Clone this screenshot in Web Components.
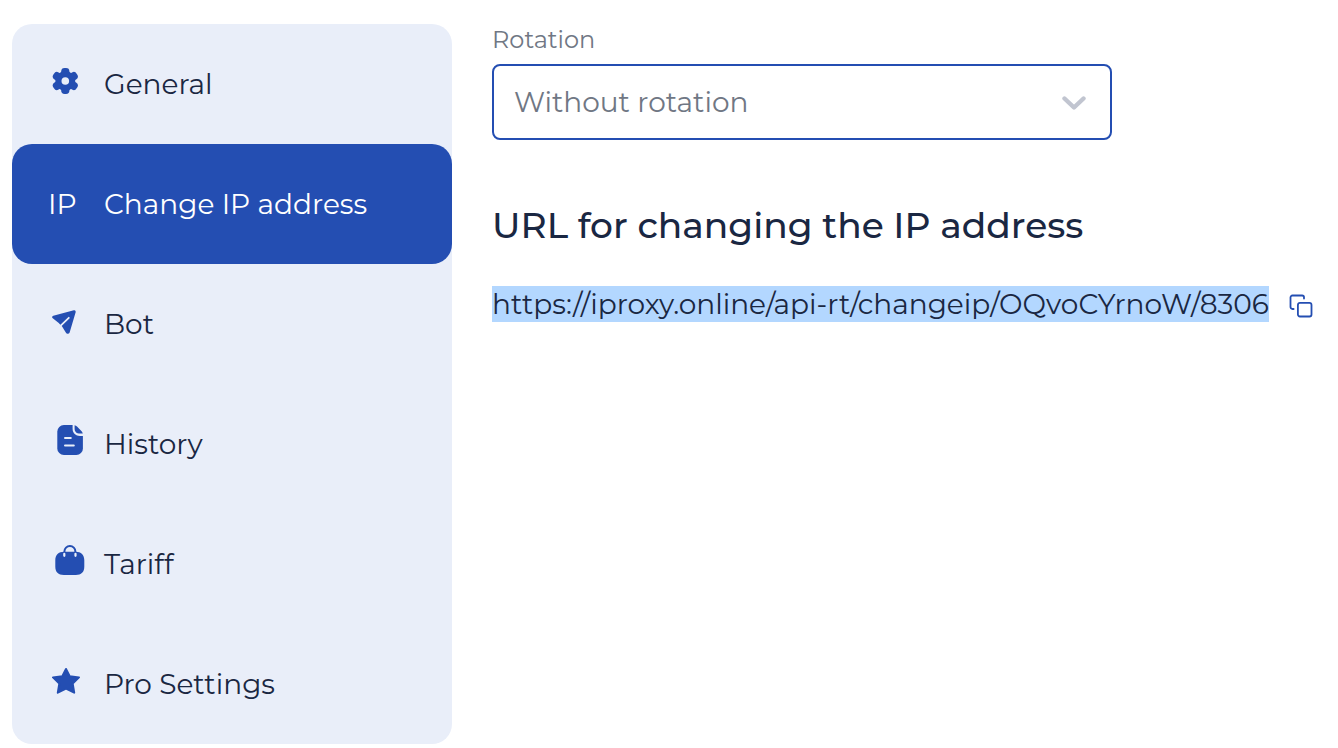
<!DOCTYPE html>
<html lang="en">
<head>
<meta charset="utf-8">
<meta name="viewport" content="width=device-width, initial-scale=1">
<title>Change IP address</title>
<style>
  :root {
    --blue: #244eb2;
    --panel: #e9eef9;
    --ink: #1a2742;
    --muted: #707784;
    --highlight: #b3d7ff;
  }
  body {
    margin: 0;
    background: #fff;
    color: var(--ink);
    font: 400 28px/36px Montserrat, Inter, "Open Sans", sans-serif;
  }
</style>
</head>
<body>
<settings-page>
  <settings-nav slot="nav">
    <nav-item icon="gear" href="#general">General</nav-item>
    <nav-item icon="ip" href="#change-ip" active>Change IP address</nav-item>
    <nav-item icon="plane" href="#bot">Bot</nav-item>
    <nav-item icon="file" href="#history">History</nav-item>
    <nav-item icon="bag" href="#tariff">Tariff</nav-item>
    <nav-item icon="star" href="#pro">Pro Settings</nav-item>
  </settings-nav>
  <select-field label="Rotation" options="Without rotation"></select-field>
  <copy-url heading="URL for changing the IP address">https://iproxy.online/api-rt/changeip/OQvoCYrnoW/8306</copy-url>
</settings-page>

<script>
  const define = (name, template, setup) => {
    customElements.define(name, class extends HTMLElement {
      connectedCallback() {
        if (this.shadowRoot) return;
        this.attachShadow({ mode: "open" }).innerHTML = template;
        if (setup) setup(this, this.shadowRoot);
      }
    });
  };

  const icons = {
    gear: `<g fill="currentColor"><circle cx="13.3" cy="18" r="10"/>
      <rect x="9.2" y="5" width="8.2" height="26" rx="3.4"/>
      <rect x="9.2" y="4.5" width="8.2" height="27" rx="3.4" transform="rotate(60 13.3 18)"/>
      <rect x="9.2" y="4.5" width="8.2" height="27" rx="3.4" transform="rotate(120 13.3 18)"/></g>
      <circle cx="13.3" cy="18" r="3.8" fill="var(--panel)"/>`,
    plane: `<path fill="currentColor" stroke="currentColor" stroke-width="3" stroke-linejoin="round" d="M1.7 14.2 22.2 8.8 16.2 29.2H15.4L11.2 22.4 8 19.2Z"/>
      <path stroke="var(--panel)" stroke-width="1.8" fill="none" stroke-linecap="round" d="M9 22.4 16.8 14.8"/>`,
    file: `<rect x="5.3" y="2" width="25.6" height="30" rx="6.6" fill="currentColor"/>
      <path fill="var(--panel)" d="M20.6 1H32v12h-4.2c-4 0-7.2-3-7.2-7z"/>
      <path fill="currentColor" d="M22.6 2.2Q24 2.6 25 3.6L29.6 8.2Q30.4 9.2 30.8 10.6H28c-3.4 0-5.4-2-5.4-5.2z"/>
      <path stroke="var(--panel)" stroke-width="2" stroke-linecap="round" d="M13 15h5.8M13 22.4h8.8"/>`,
    bag: `<path fill="currentColor" d="M12 8.7h11.6c5.6 0 8.7 3.3 8.7 8.5v6.3c0 5.6-3 8.5-8.5 8.5h-12c-5.5 0-8.5-2.9-8.5-8.5v-6.3c0-5.2 3.1-8.5 8.7-8.5z"/>
      <path fill="none" stroke="currentColor" stroke-width="2" d="M12.4 10V8.5a5.5 5.5 0 0 1 11 0V10"/>
      <path stroke="var(--panel)" stroke-width="2.2" stroke-linecap="round" d="M12.3 10.8v2M23.5 10.8v2"/>`,
    star: `<path fill="currentColor" stroke="currentColor" stroke-width="2" stroke-linejoin="round" d="M14 6 17.7 13.3 27 14.4 20.7 20.6 22.2 29.7 14 25.7 5.8 29.7 7.3 20.6 1 14.4 10.3 13.3Z"/>`
  };

  define("settings-page", `
    <style>
      :host { display: flex; align-items: flex-start; gap: 40px; padding: 24px 12px 4px; }
      ::slotted([slot="nav"]) { flex: 0 1 440px; }
      main { flex: 1 1 0; min-width: 0; display: flex; flex-direction: column; gap: 64px; }
    </style>
    <slot name="nav"></slot>
    <main><slot></slot></main>`);

  define("settings-nav", `
    <style>
      :host { display: block; background: var(--panel); border-radius: 20px; }
      nav { display: flex; flex-direction: column; }
    </style>
    <nav aria-label="Settings"><slot></slot></nav>`);

  define("nav-item", `
    <style>
      :host { display: block; }
      a { display: flex; align-items: center; box-sizing: border-box; min-height: 120px; padding: 0 40px;
          border-radius: 20px; color: inherit; text-decoration: none; white-space: nowrap; }
      .icon { flex: none; display: flex; width: 52px; color: var(--blue); }
      svg { display: block; width: 36px; height: 36px; padding-bottom: 6px; }
      :host([active]) a { background: var(--blue); color: #fff; }
      :host([active]) .icon { color: #fff; }
      .ip { margin-left: -4px; }
    </style>
    <a><span class="icon" aria-hidden="true"></span><slot></slot></a>`,
    (host, root) => {
      const link = root.querySelector("a");
      const icon = host.getAttribute("icon");
      link.href = host.getAttribute("href");
      if (host.hasAttribute("active")) link.setAttribute("aria-current", "page");
      root.querySelector(".icon").innerHTML = icons[icon]
        ? `<svg viewBox="0 0 36 36">${icons[icon]}</svg>`
        : `<span class="ip">IP</span>`;
    });

  define("select-field", `
    <style>
      :host { display: grid; gap: 8px; max-width: 620px; color: var(--muted); }
      label { font-size: 24px; line-height: 32px; }
      .box { display: grid; align-items: center; }
      .box > * { grid-area: 1 / 1; }
      select { appearance: none; box-sizing: border-box; width: 100%; height: 76px; margin: 0; padding: 0 60px 0 20px;
               border: 2px solid var(--blue); border-radius: 8px; background: #fff; color: inherit; font: inherit; outline: none; }
      svg { justify-self: end; width: 24px; height: 16px; margin-right: 26px; pointer-events: none; }
    </style>
    <label for="field"></label>
    <div class="box">
      <select id="field"></select>
      <svg viewBox="0 0 24 16" aria-hidden="true"><path d="M2.5 4.5 12 13.5 21.5 4.5" fill="none" stroke="#c1c5d0" stroke-width="4.4" stroke-linecap="round" stroke-linejoin="round"/></svg>
    </div>`,
    (host, root) => {
      root.querySelector("label").textContent = host.getAttribute("label");
      for (const text of host.getAttribute("options").split("|")) root.querySelector("select").add(new Option(text));
    });

  define("copy-url", `
    <style>
      :host { display: block; }
      h2 { margin: 0 0 40px; font-size: 36px; line-height: 42px; font-weight: 500; }
      .row { display: flex; align-items: center; gap: 20px; }
      .url { background: var(--highlight); white-space: nowrap; }
      button { flex: none; padding: 4px 0 0; border: 0; background: none; color: var(--blue); cursor: pointer; }
      svg { display: block; }
    </style>
    <h2></h2>
    <div class="row">
      <span class="url"><slot></slot></span>
      <button type="button" aria-label="Copy URL">
        <svg width="24" height="24" viewBox="0 0 24 24" fill="none" stroke="currentColor" stroke-width="1.8" stroke-linecap="round">
          <rect x="8.9" y="8.9" width="13.6" height="13.6" rx="2"/>
          <path d="M4.6 15H3.4a1.9 1.9 0 0 1-1.9-1.9V3.4a1.9 1.9 0 0 1 1.9-1.9h9.7A1.9 1.9 0 0 1 15 3.4v1.2"/>
        </svg>
      </button>
    </div>`,
    (host, root) => {
      root.querySelector("h2").textContent = host.getAttribute("heading");
      root.querySelector("button").addEventListener("click", () => navigator.clipboard?.writeText(host.textContent));
    });
</script>
</body>
</html>
